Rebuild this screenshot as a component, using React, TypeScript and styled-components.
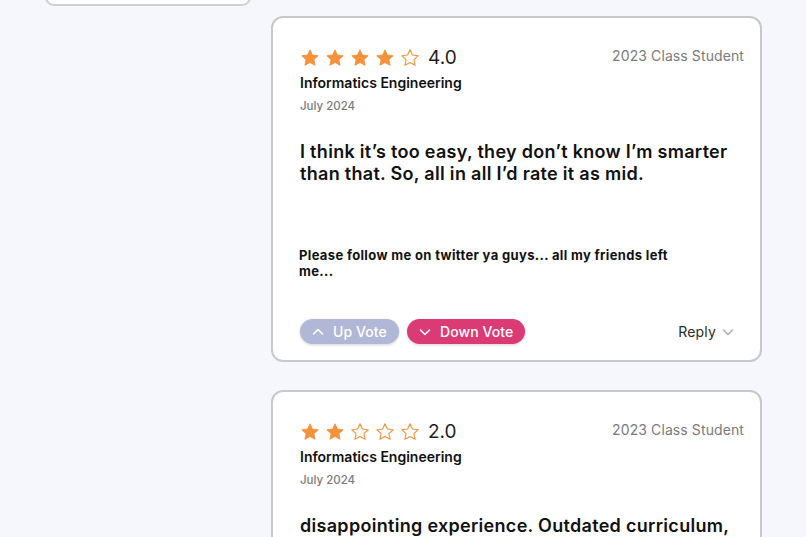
import React from 'react';
import styled, { createGlobalStyle } from 'styled-components';

const GlobalStyle = createGlobalStyle`
  html, body {
    margin: 0;
    padding: 0;
    background: #f6f7fc;
    overflow: hidden;
    font-family: 'Inter', 'Noto Sans', sans-serif;
  }
`;

const Page = styled.div`
  display: flex;
  align-items: flex-start;
  gap: 20px;
  padding-left: 45px;
  height: 537px;
  overflow: hidden;
`;

const Sidebar = styled.aside`
  width: 206px;
  flex-shrink: 0;
  margin-top: -210px;
`;

const FilterCard = styled.div`
  height: 216px;
  box-sizing: border-box;
  background: #fff;
  border: 2px solid #cfcfd3;
  border-radius: 9px;
`;

const Feed = styled.main`
  width: 491px;
  display: flex;
  flex-direction: column;
  gap: 28px;
  padding-top: 16px;
`;

const Card = styled.article`
  box-sizing: border-box;
  background: #fff;
  border: 2px solid #c8c8cc;
  border-radius: 12px;
  padding: 30px 16px 16px 27px;
  min-height: 346px;
  display: flex;
  flex-direction: column;
`;

const Header = styled.div`
  display: flex;
  justify-content: space-between;
  align-items: flex-start;
`;

const RatingRow = styled.div`
  display: flex;
  align-items: center;
  height: 20px;
`;

const Stars = styled.div`
  display: flex;
  gap: 5px;
  margin-right: 8px;
`;

const Score = styled.span`
  font-size: 19px;
  color: #1e1e1e;
  line-height: 20px;
`;

const ClassTag = styled.span`
  font-size: 14px;
  color: #7a7a7a;
  line-height: 16px;
  letter-spacing: 0.1px;
`;

const Major = styled.div`
  margin-top: 6px;
  font-size: 14px;
  font-weight: 600;
  line-height: 18px;
  color: #111;
`;

const DateText = styled.div`
  margin-top: 7px;
  font-size: 11.5px;
  font-weight: 500;
  line-height: 14px;
  color: #7b7b7b;
`;

const Body = styled.p`
  margin: 28px 0 0;
  font-size: 18px;
  font-weight: 600;
  line-height: 22px;
  letter-spacing: 0.3px;
  color: #111;
  max-width: 440px;
  min-height: 106px;
`;

const Note = styled.p`
  margin: 0 0 0 -1px;
  max-width: 390px;
  font-size: 13px;
  font-weight: 700;
  line-height: 16px;
  letter-spacing: 0.35px;
  color: #111;
`;

const Footer = styled.div`
  display: flex;
  align-items: center;
  justify-content: space-between;
  margin-top: 40px;
  padding-right: 10px;
`;

const Votes = styled.div`
  display: flex;
  gap: 8px;
`;

const VoteButton = styled.button<{ $tone: 'up' | 'down' }>`
  display: flex;
  align-items: center;
  gap: 9px;
  height: 25px;
  padding: 0 12px 0 12px;
  border: none;
  border-radius: 13px;
  background: ${p => (p.$tone === 'up' ? '#b1b7d6' : '#dc3a74')};
  color: #fff;
  font-family: inherit;
  font-size: 14px;
  font-weight: 500;
  letter-spacing: 0.1px;
  box-shadow: 0 1px 3px rgba(0, 0, 0, 0.18);
  cursor: pointer;
`;

const ReplyButton = styled.button`
  display: flex;
  align-items: center;
  gap: 6px;
  border: none;
  background: none;
  padding: 0;
  font-family: inherit;
  font-size: 14px;
  letter-spacing: 0.2px;
  color: #2a2a2a;
  cursor: pointer;
`;

const STAR = 'M12 2.2l2.9 6.3 6.9.8-5.1 4.7 1.4 6.8L12 17.4l-6.1 3.4 1.4-6.8L2.2 9.3l6.9-.8z';

const Star = ({ filled }: { filled: boolean }) => (
  <svg width="20" height="20" viewBox="0 0 24 24">
    <path
      d={STAR}
      fill={filled ? '#f5913a' : 'none'}
      stroke="#f5913a"
      strokeWidth={filled ? 1 : 1.3}
      strokeLinejoin="round"
    />
  </svg>
);

const Chevron = ({ dir, color = '#fff', size = 12 }: { dir: 'up' | 'down'; color?: string; size?: number }) => (
  <svg width={size} height={size} viewBox="0 0 12 12" fill="none">
    <path
      d={dir === 'up' ? 'M1.5 8l4.5-4.5L10.5 8' : 'M1.5 4l4.5 4.5L10.5 4'}
      stroke={color}
      strokeWidth="1.6"
      strokeLinecap="round"
      strokeLinejoin="round"
    />
  </svg>
);

interface Review {
  rating: number;
  major: string;
  date: string;
  cohort: string;
  body: string;
  note: string;
}

const reviews: Review[] = [
  {
    rating: 4,
    major: 'Informatics Engineering',
    date: 'July 2024',
    cohort: '2023 Class Student',
    body: 'I think it’s too easy, they don’t know I’m smarter than that. So, all in all I’d rate it as mid.',
    note: 'Please follow me on twitter ya guys... all my friends left me...',
  },
  {
    rating: 2,
    major: 'Informatics Engineering',
    date: 'July 2024',
    cohort: '2023 Class Student',
    body: 'disappointing experience. Outdated curriculum, unhelpful lecturers and way too many group projects.',
    note: 'Would not recommend to anyone who actually wants to learn.',
  },
];

const ReviewCard = ({ review }: { review: Review }) => (
  <Card>
    <Header>
      <div>
        <RatingRow>
          <Stars>
            {[1, 2, 3, 4, 5].map(i => (
              <Star key={i} filled={i <= review.rating} />
            ))}
          </Stars>
          <Score>{review.rating.toFixed(1)}</Score>
        </RatingRow>
        <Major>{review.major}</Major>
        <DateText>{review.date}</DateText>
      </div>
      <ClassTag>{review.cohort}</ClassTag>
    </Header>
    <Body>{review.body}</Body>
    <Note>{review.note}</Note>
    <Footer>
      <Votes>
        <VoteButton $tone="up">
          <Chevron dir="up" />
          Up Vote
        </VoteButton>
        <VoteButton $tone="down">
          <Chevron dir="down" />
          Down Vote
        </VoteButton>
      </Votes>
      <ReplyButton>
        Reply
        <Chevron dir="down" color="#b0b0b0" size={12} />
      </ReplyButton>
    </Footer>
  </Card>
);

export default function App() {
  return (
    <>
      <GlobalStyle />
      <Page>
        <Sidebar>
          <FilterCard />
        </Sidebar>
        <Feed>
          {reviews.map((r, i) => (
            <ReviewCard key={i} review={r} />
          ))}
        </Feed>
      </Page>
    </>
  );
}
